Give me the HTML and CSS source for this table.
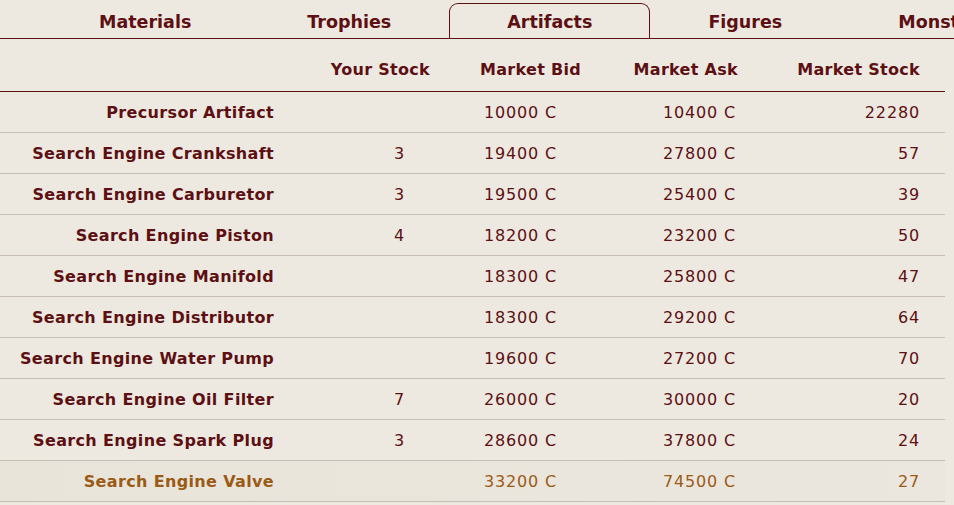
FILE: index.html
```html
<!DOCTYPE html>
<html>
<head>
<meta charset="utf-8">
<link rel="stylesheet" href="styles.css">
</head>
<body>
<nav class="tabs">
  <div class="tab">Materials</div>
  <div class="tab">Trophies</div>
  <div class="tab active">Artifacts</div>
  <div class="tab">Figures</div>
  <div class="tab">Monsters</div>
</nav>
<div class="market">
  <div class="row head">
    <div class="c name"></div>
    <div class="c stock">Your Stock</div>
    <div class="c bid">Market Bid</div>
    <div class="c ask">Market Ask</div>
    <div class="c mstock">Market Stock</div>
  </div>
  <div class="row"><div class="c name">Precursor Artifact</div><div class="c stock"></div><div class="c bid">10000 C</div><div class="c ask">10400 C</div><div class="c mstock">22280</div></div>
  <div class="row"><div class="c name">Search Engine Crankshaft</div><div class="c stock">3</div><div class="c bid">19400 C</div><div class="c ask">27800 C</div><div class="c mstock">57</div></div>
  <div class="row"><div class="c name">Search Engine Carburetor</div><div class="c stock">3</div><div class="c bid">19500 C</div><div class="c ask">25400 C</div><div class="c mstock">39</div></div>
  <div class="row"><div class="c name">Search Engine Piston</div><div class="c stock">4</div><div class="c bid">18200 C</div><div class="c ask">23200 C</div><div class="c mstock">50</div></div>
  <div class="row"><div class="c name">Search Engine Manifold</div><div class="c stock"></div><div class="c bid">18300 C</div><div class="c ask">25800 C</div><div class="c mstock">47</div></div>
  <div class="row"><div class="c name">Search Engine Distributor</div><div class="c stock"></div><div class="c bid">18300 C</div><div class="c ask">29200 C</div><div class="c mstock">64</div></div>
  <div class="row"><div class="c name">Search Engine Water Pump</div><div class="c stock"></div><div class="c bid">19600 C</div><div class="c ask">27200 C</div><div class="c mstock">70</div></div>
  <div class="row"><div class="c name">Search Engine Oil Filter</div><div class="c stock">7</div><div class="c bid">26000 C</div><div class="c ask">30000 C</div><div class="c mstock">20</div></div>
  <div class="row"><div class="c name">Search Engine Spark Plug</div><div class="c stock">3</div><div class="c bid">28600 C</div><div class="c ask">37800 C</div><div class="c mstock">24</div></div>
  <div class="row hover"><div class="c name">Search Engine Valve</div><div class="c stock"></div><div class="c bid">33200 C</div><div class="c ask">74500 C</div><div class="c mstock">27</div></div>
</div>
</body>
</html>
```

FILE: styles.css
```css
html, body {
  margin: 0;
  padding: 0;
  background: #ede9e0;
  overflow: hidden;
}
body {
  font-family: "DejaVu Sans", Verdana, sans-serif;
  color: #5c1014;
  width: 954px;
  height: 505px;
}
.tabs {
  display: flex;
  padding-left: 41px;
  padding-top: 3px;
  height: 35px;
  border-bottom: 1px solid #5c1014;
  white-space: nowrap;
  overflow: hidden;
}
.tab {
  flex: 0 0 auto;
  padding: 1px 57px 0;
  text-align: center;
  font-weight: bold;
  font-size: 17.5px;
  line-height: 34px;
  box-sizing: border-box;
  border: 1px solid transparent;
  border-bottom: none;
}
.tab.active {
  border-color: #5c1014;
  border-radius: 9px 9px 0 0;
  background: #ede9e0;
  margin-bottom: -1px;
  height: 36px;
}
.market {
  width: 945px;
}
.row {
  display: grid;
  grid-template-columns: 300px 155px 155px 155px 180px;
  height: 40px;
  align-items: center;
  border-bottom: 1px solid #c8bdb4;
  font-size: 16px;
  letter-spacing: 0.85px;
}
.row.head {
  height: 43px;
  padding-top: 9px;
  border-bottom: 1px solid #5c1014;
  font-weight: bold;
  letter-spacing: 0.3px;
}
.c {
  text-align: right;
  white-space: nowrap;
}
.name { padding-right: 26px; font-weight: bold; letter-spacing: 0.35px; }
.stock { padding-right: 50px; }
.bid { padding-right: 53px; }
.ask { padding-right: 29px; }
.mstock { padding-right: 25px; }
.head .stock { padding-right: 25px; }
.head .bid { padding-right: 29px; }
.head .ask { padding-right: 27px; }
.row.hover {
  background: linear-gradient(to right, #e8e4da, #ebe7de);
  color: #9b5a16;
}
```
